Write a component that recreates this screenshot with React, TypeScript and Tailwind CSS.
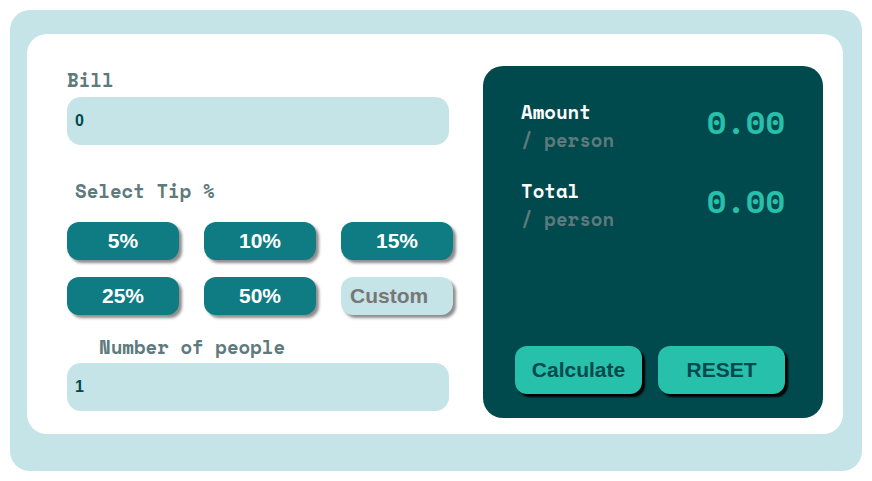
const tips = ["5%", "10%", "15%", "25%", "50%"];

const mono = "font-['Space_Mono','DejaVu_Sans_Mono',monospace]";

function ResultRow({ label, value }: { label: string; value: string }) {
  return (
    <div className="flex justify-between items-start">
      <div className={`${mono} font-bold`}>
        <div className="text-white text-[19px] leading-[28px]">{label}</div>
        <div className="text-[#5e7a7d] text-[19px] leading-[28px]">/ person</div>
      </div>
      <div className={`${mono} font-bold text-[#26c0ab] text-[32px] leading-[40px] mt-[4px]`}>
        {value}
      </div>
    </div>
  );
}

export default function App() {
  return (
    <div className="w-[872px] h-[481px] bg-white p-[10px] font-['Liberation_Sans',Arial,sans-serif]">
      <div className="w-[852px] h-[461px] bg-[#c5e4e7] rounded-[20px] pl-[17px] pt-[24px] pr-[19px] pb-[37px]">
        <div className="w-[816px] h-[400px] bg-white rounded-[20px] flex pt-[32px] pb-[16px] pl-[40px] pr-[20px]">
          {/* left side */}
          <div className="w-[416px] flex flex-col">
            <div className={`${mono} font-bold text-[#5e7a7d] text-[19px] h-[28px] flex items-center`}>
              Bill
            </div>
            <div className="mt-[3px] w-[382px] h-[48px] bg-[#c5e4e7] rounded-[14px] flex items-center px-[8px] text-[16px] font-bold text-[#00494d]">
              0
            </div>

            <div className={`${mono} font-bold text-[#5e7a7d] text-[19px] h-[28px] flex items-center mt-[32px] pl-[8px]`}>
              Select Tip %
            </div>
            <div className="mt-[17px] grid grid-cols-[112px_112px_112px] gap-x-[25px] gap-y-[17px]">
              {tips.map((t) => (
                <button
                  key={t}
                  className="h-[38px] rounded-[12px] bg-[#0e7c82] text-white text-[21px] font-bold shadow-[3px_3px_3px_rgba(0,0,0,0.45)]"
                >
                  {t}
                </button>
              ))}
              <button className="h-[38px] rounded-[12px] bg-[#c5e4e7] text-[#777777] text-[21px] font-bold text-left pl-[9px] shadow-[3px_3px_3px_rgba(0,0,0,0.45)]">
                Custom
              </button>
            </div>

            <div className={`${mono} font-bold text-[#5e7a7d] text-[19px] h-[28px] flex items-center mt-[18px] pl-[32px]`}>
              Number of people
            </div>
            <div className="mt-[2px] w-[382px] h-[48px] bg-[#c5e4e7] rounded-[14px] flex items-center px-[8px] text-[16px] font-bold text-[#00494d]">
              1
            </div>
          </div>

          {/* right side */}
          <div className="w-[340px] bg-[#00494d] rounded-[20px] flex flex-col justify-between pt-[32px] pb-[24px] pl-[38px] pr-[38px]">
            <div className="flex flex-col gap-[23px]">
              <ResultRow label="Amount" value="0.00" />
              <ResultRow label="Total" value="0.00" />
            </div>
            <div className="flex gap-[16px] ml-[-6px]">
              <button className="w-[128px] h-[48px] rounded-[12px] bg-[#26c0ab] text-[#00494d] text-[21px] font-bold shadow-[3px_3px_2px_#000]">
                Calculate
              </button>
              <button className="w-[128px] h-[48px] rounded-[12px] bg-[#26c0ab] text-[#00494d] text-[21px] font-bold shadow-[3px_3px_2px_#000]">
                RESET
              </button>
            </div>
          </div>
        </div>
      </div>
    </div>
  );
}
